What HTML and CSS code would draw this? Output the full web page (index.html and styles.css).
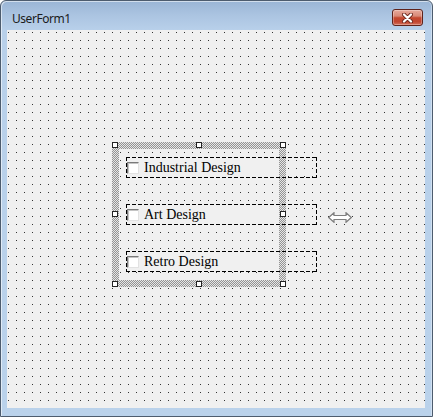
FILE: index.html
```html
<!DOCTYPE html>
<html>
<head>
<meta charset="utf-8">
<link rel="stylesheet" href="styles.css">
</head>
<body>
<div class="window">
  <div class="titlebar">
    <span class="title">UserForm1</span>
    <div class="close">
      <svg width="11" height="10" viewBox="0 0 11 10">
        <path d="M2 1.5 L9 8.5 M9 1.5 L2 8.5" stroke="#6e2a20" stroke-width="4" stroke-linecap="round"/>
        <path d="M2 1.5 L9 8.5 M9 1.5 L2 8.5" stroke="#ffffff" stroke-width="2.2" stroke-linecap="round"/>
      </svg>
    </div>
  </div>
  <div class="client">
    <div class="frame">
      <div class="frame-inner">
        <div class="chk"><span class="box"></span><span class="label">Industrial Design</span></div>
        <div class="chk"><span class="box"></span><span class="label">Art Design</span></div>
        <div class="chk"><span class="box"></span><span class="label">Retro Design</span></div>
      </div>
      <span class="handle h-tl"></span>
      <span class="handle h-tm"></span>
      <span class="handle h-tr"></span>
      <span class="handle h-ml"></span>
      <span class="handle h-mr"></span>
      <span class="handle h-bl"></span>
      <span class="handle h-bm"></span>
      <span class="handle h-br"></span>
    </div>
    <svg class="cursor" width="24" height="11" viewBox="0 0 24 11">
      <path d="M0.7 5.5 L6 0.7 L6 3.5 L18 3.5 L18 0.7 L23.3 5.5 L18 10.3 L18 7.5 L6 7.5 L6 10.3 Z" fill="#ffffff" stroke="#7e7e7e" stroke-width="1.2" stroke-linejoin="miter"/>
    </svg>
  </div>
</div>
</body>
</html>
```

FILE: styles.css
```css
html, body {
  margin: 0;
  padding: 0;
}

body {
  width: 433px;
  height: 417px;
  overflow: hidden;
  background: #ffffff;
}

.window {
  box-sizing: border-box;
  width: 433px;
  height: 417px;
  border: 1px solid #4d5c6e;
  border-radius: 6px 6px 0 0;
  background: linear-gradient(#9ab5d5 0, #abc4e1 14px, #b8d0ea 29px, #bad2eb 100%);
  box-shadow: inset 1px 1px 0 rgba(255, 255, 255, 0.55), inset -1px 0 0 rgba(255, 255, 255, 0.35);
  display: flex;
  flex-direction: column;
  padding: 0 7px 8px 6px;
}

.titlebar {
  height: 29px;
  flex: none;
  display: flex;
  align-items: flex-start;
  justify-content: space-between;
}

.title {
  font-family: "Noto Sans", "Open Sans", sans-serif;
  font-size: 12px;
  letter-spacing: -0.45px;
  line-height: 15px;
  padding: 10px 0 0 5px;
  color: #1b1b1b;
}

.close {
  width: 31px;
  height: 17px;
  box-sizing: border-box;
  margin: 8px 2px 0 0;
  border: 1px solid #5e231b;
  border-radius: 3px;
  background: linear-gradient(#e8aa9c 0, #d98a78 40%, #c4482f 52%, #c14530 78%, #d4725c 100%);
  box-shadow: inset 0 0 0 1px rgba(255, 255, 255, 0.3);
  display: flex;
  align-items: center;
  justify-content: center;
}

.client {
  position: relative;
  height: 378px;
  flex: none;
  box-sizing: border-box;
  padding: 112px 0 0 105px;
  background-color: #f0f0f0;
  background-image:
    linear-gradient(to right, #f0f0f0 7px, transparent 7px),
    linear-gradient(#f0f0f0 7px, #333333 7px);
  background-size: 8px 8px;
  background-position: 2px 3px;
}

.frame {
  position: relative;
  width: 174px;
  height: 145px;
  box-sizing: border-box;
  padding: 7px;
  background: repeating-conic-gradient(#949494 0 25%, #e6e6e6 0 50%) 0 0 / 2px 2px;
}

.frame-inner {
  height: 100%;
  box-sizing: border-box;
  padding: 8px 0 0 7px;
  display: flex;
  flex-direction: column;
  gap: 26px;
  background-color: #f0f0f0;
  background-image:
    linear-gradient(to right, #f0f0f0 7px, transparent 7px),
    linear-gradient(#f0f0f0 7px, #333333 7px);
  background-size: 8px 8px;
  background-position: 2px 4px;
}

.chk {
  flex: none;
  width: 191px;
  height: 21px;
  display: flex;
  align-items: center;
  background:
    repeating-linear-gradient(to right, #000 0 4px, transparent 4px 6px) left top / 100% 1px no-repeat,
    repeating-linear-gradient(to right, #000 0 4px, transparent 4px 6px) left bottom / 100% 1px no-repeat,
    repeating-linear-gradient(#000 0 4px, transparent 4px 6px) left top / 1px 100% no-repeat,
    repeating-linear-gradient(#000 0 4px, transparent 4px 6px) right top / 1px 100% no-repeat,
    linear-gradient(to right, #f0f0f0 153px, transparent 153px);
}

.box {
  flex: none;
  width: 12px;
  height: 12px;
  box-sizing: border-box;
  margin-left: 1px;
  border-top: 1px solid #7a7a7a;
  border-left: 1px solid #7a7a7a;
  border-right: 1px solid #e2e2e2;
  border-bottom: 1px solid #e2e2e2;
  background: #ffffff;
  box-shadow: inset 1px 1px 0 #c4c4c4;
}

.label {
  margin-left: 5px;
  font-family: "Liberation Serif", "Times New Roman", serif;
  font-size: 14px;
  line-height: 21px;
  color: #000;
  white-space: nowrap;
}

.handle {
  position: absolute;
  width: 6px;
  height: 6px;
  box-sizing: border-box;
  border: 1px solid #222;
  background: #ffffff;
}

.h-tl { left: 0; top: 0; }
.h-tm { left: 84px; top: 0; }
.h-tr { right: 0; top: 0; }
.h-ml { left: 0; top: 69px; }
.h-mr { right: 0; top: 69px; }
.h-bl { left: 0; bottom: 0; }
.h-bm { left: 84px; bottom: 0; }
.h-br { right: 0; bottom: 0; }

.cursor {
  position: absolute;
  left: 321px;
  top: 182px;
}
```
